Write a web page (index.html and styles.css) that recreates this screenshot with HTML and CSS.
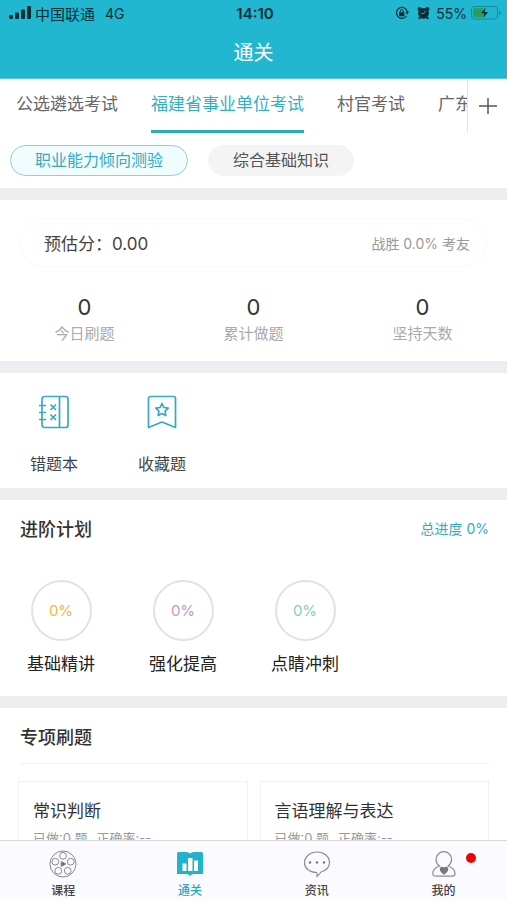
FILE: index.html
```html
<!DOCTYPE html>
<html lang="zh-CN">
<head>
<meta charset="utf-8">
<meta name="viewport" content="width=device-width, initial-scale=1">
<title>通关</title>
<link rel="stylesheet" href="styles.css">
</head>
<body>
<div class="app">
  <header class="header">
    <div class="status">
      <div class="status-side">
        <svg class="signal" width="22" height="14" viewBox="0 0 22 14" aria-hidden="true">
          <rect x="0" y="9" width="4" height="4" rx="1"/><rect x="6" y="6.500" width="4" height="6.500" rx="1"/><rect x="12" y="3.500" width="4" height="9.500" rx="1"/><rect x="18" y="0" width="4" height="13" rx="1"/>
        </svg>
        <span class="carrier">中国联通</span>
        <span>4G</span>
      </div>
      <span class="clock">14:10</span>
      <div class="status-side status-end">
        <svg width="14" height="14" viewBox="0 0 14 14" aria-hidden="true">
          <path d="M9.500 2A5.500 5.500 0 1 0 11.500 10M9.500 2a5.500 5.500 0 0 1 2.800 4" fill="none" stroke="#0b2e36" stroke-width="1.200"/>
          <path d="M10.300 5.800h3.700l-1.700 2.700z"/>
          <rect x="4" y="6.300" width="5.400" height="3.900" rx=".6"/>
          <path d="M5.200 6.500V5.300a1.500 1.500 0 0 1 3 0v1.200" fill="none" stroke="#0b2e36"/>
        </svg>
        <svg class="alarm" width="13" height="14" viewBox="0 0 13 14" aria-hidden="true">
          <circle cx="2.600" cy="3" r="2.100"/><circle cx="10.400" cy="3" r="2.100"/><circle cx="6.500" cy="7.300" r="5.400"/>
          <circle cx="2.600" cy="12" r="1.200"/><circle cx="10.400" cy="12" r="1.200"/>
          <path d="M8.500 4.800L6.600 7.500H4.300" fill="none" stroke="#21b7d0" stroke-width=".9"/>
        </svg>
        <span class="percent">55%</span>
        <svg width="30" height="14" viewBox="0 0 30 14" aria-hidden="true">
          <rect x=".5" y=".5" width="26" height="12.500" rx="3" fill="none" stroke="#168a9c"/>
          <path d="M3.500 2.200H14v9H3.500a1.500 1.500 0 0 1-1.500-1.500v-6a1.500 1.500 0 0 1 1.500-1.500z" fill="#25a05a"/>
          <path d="M28 4.500c2 .8 2 3.700 0 4.500z" fill="#168a9c"/>
          <path d="M15 1.500L9.500 7.500h3.700L11.800 12 17.500 6h-3.700z" fill="#06262d" stroke="#21b7d0" stroke-width=".4"/>
        </svg>
      </div>
    </div>
    <h1 class="title">通关</h1>
  </header>

  <main class="content">
    <section class="exam">
      <div class="exam-row">
        <nav class="exam-tabs">
          <a class="exam-tab" href="#">公选遴选考试</a>
          <a class="exam-tab active" href="#">福建省事业单位考试</a>
          <a class="exam-tab" href="#">村官考试</a>
          <a class="exam-tab" href="#">广东</a>
        </nav>
        <button class="add" aria-label="添加考试">
          <svg width="18" height="18" viewBox="0 0 18 18" fill="none" stroke="#555" stroke-width="1.500" aria-hidden="true"><path d="M0 9h18M9 1v16"/></svg>
        </button>
      </div>
      <div class="pills">
        <button class="pill selected">职业能力倾向测验</button>
        <button class="pill">综合基础知识</button>
      </div>
    </section>

    <section class="summary">
      <div class="score">
        <span class="score-main">预估分：0.00</span>
        <span class="score-rank">战胜 0.0% 考友</span>
      </div>
      <div class="stats">
        <div class="stat"><span class="num">0</span><span class="label">今日刷题</span></div>
        <div class="stat"><span class="num">0</span><span class="label">累计做题</span></div>
        <div class="stat"><span class="num">0</span><span class="label">坚持天数</span></div>
      </div>
    </section>

    <section class="tools">
      <a class="tool" href="#">
        <svg width="32" height="34" viewBox="0 0 32 34" fill="none" stroke="#35abc0" stroke-width="1.700" aria-hidden="true">
          <rect x="4" y="1.500" width="26" height="31" rx="2.500"/>
          <path d="M21.500 1.500v31M1 10.500h7M1 17.500h7M1 24.500h7"/>
          <path d="M12.500 9.500l5.500 5.500M18 9.500l-5.500 5.500M12.500 19.500l5.500 5.500M18 19.500l-5.500 5.500"/>
        </svg>
        <span>错题本</span>
      </a>
      <a class="tool" href="#">
        <svg width="32" height="34" viewBox="0 0 32 34" fill="none" stroke="#35abc0" stroke-width="1.700" stroke-linejoin="round" aria-hidden="true">
          <path d="M2.500 32.500V3.500a2 2 0 0 1 2-2h23a2 2 0 0 1 2 2v29L16 27z"/>
          <path d="M16 8.500l1.900 4 4.300.6-3.100 3.100.7 4.400-3.800-2.100-3.800 2.100.7-4.400-3.100-3.100 4.300-.6z"/>
        </svg>
        <span>收藏题</span>
      </a>
    </section>

    <section class="plan">
      <div class="section-head">
        <h2>进阶计划</h2>
        <span class="progress">总进度 0%</span>
      </div>
      <div class="stages">
        <div class="stage"><span class="ring gold">0%</span><span>基础精讲</span></div>
        <div class="stage"><span class="ring purple">0%</span><span>强化提高</span></div>
        <div class="stage"><span class="ring green">0%</span><span>点睛冲刺</span></div>
      </div>
    </section>

    <section class="practice">
      <div class="section-head ruled"><h2>专项刷题</h2></div>
      <div class="cards">
        <a class="card" href="#"><h3>常识判断</h3><p><span>已做:0 题</span><span>正确率:--</span></p></a>
        <a class="card" href="#"><h3>言语理解与表达</h3><p><span>已做:0 题</span><span>正确率:--</span></p></a>
      </div>
    </section>
  </main>

  <nav class="tabbar">
    <a class="tab" href="#">
      <svg width="28" height="28" viewBox="0 0 28 28" fill="none" stroke="#8c8c8c" aria-hidden="true">
        <circle cx="14" cy="14" r="13"/><circle cx="14" cy="5.800" r="3.400"/><circle cx="6.300" cy="11.700" r="3.400"/><circle cx="21.700" cy="11.700" r="3.400"/><circle cx="9.300" cy="20.800" r="3.400"/><circle cx="18.700" cy="20.800" r="3.400"/>
        <path d="M12.200 11.500v5l4.800-2.500z" fill="#666"/>
      </svg>
      <span>课程</span>
    </a>
    <a class="tab current" href="#">
      <svg width="28" height="28" viewBox="0 0 28 28" aria-hidden="true">
        <path d="M1 3.500Q1 2 2.500 2H10q3 0 4 1.500Q15 2 18 2h7.500Q27 2 27 3.500V24h-9.500q-2 0-3.500 2-1.500-2-3.500-2H1z" fill="#21b3cb"/>
        <path d="M6.500 13.500H10.500V21H6.500zM12 8h4.500v13H12zM18 10.500h4V21h-4z" fill="#fff"/>
      </svg>
      <span>通关</span>
    </a>
    <a class="tab" href="#">
      <svg width="28" height="28" viewBox="0 0 28 28" fill="none" stroke="#8c8c8c" stroke-width="1.200" aria-hidden="true">
        <path d="M13.500 22.500C6 22.500 1.500 18 1.500 12.500S7 2 14 2s12.500 4.500 12.500 10.500c0 5-4 8.500-8.500 9.500-1 1.500-2.300 3.200-4 4.200.3-1.200.2-2.500-.5-3.700z"/>
        <g fill="#777" stroke="none"><circle cx="7" cy="12.500" r="1.200"/><circle cx="14" cy="12.500" r="1.200"/><circle cx="21" cy="12.500" r="1.200"/></g>
      </svg>
      <span>资讯</span>
    </a>
    <a class="tab" href="#">
      <span class="icon-wrap">
        <svg width="28" height="28" viewBox="0 0 28 28" fill="none" stroke="#8c8c8c" stroke-width="1.200" aria-hidden="true">
          <path d="M9.500 16C7 14 6 12 6 9.500a7.800 7.800 0 0 1 15.600 0c0 2.500-1 4.500-3.500 6.500 4 1.500 6.900 4 6.900 7.500 0 2-1.200 2.700-3 2.700h-16c-2 0-3.200-.7-3.200-2.700 0-3.500 2.700-6 6.700-7.500z"/>
          <path d="M14 24c-2.300-1.800-3.600-3-3.600-4.500a1.800 1.800 0 0 1 3.600-.6 1.800 1.800 0 0 1 3.600.6c0 1.500-1.300 2.700-3.600 4.500z" fill="#777" stroke="#777"/>
        </svg>
        <i class="dot"></i>
      </span>
      <span>我的</span>
    </a>
  </nav>
</div>
</body>
</html>
```
FILE: styles.css
```css
* { box-sizing: border-box; }
body, h1, h2, h3, p { margin: 0; }
body {
  font-family: Inter, "Noto Sans CJK SC", sans-serif;
  font-size: 17px;
  color: #333;
  background: #eeeef2;
}
a { color: inherit; text-decoration: none; }
button { font: inherit; color: inherit; border: 0; background: none; padding: 0; }
svg { display: block; flex: none; }

.app { height: 100vh; display: flex; flex-direction: column; }

.header { flex: none; background: #21b7d0; border-bottom: 1px solid #5fc6d8; }
.status {
  display: grid;
  grid-template-columns: 1fr auto 1fr;
  align-items: center;
  height: 26px;
  padding: 0 6px 0 9px;
  font-size: 14px;
  color: #0b2e36;
}
.status-side { display: flex; align-items: center; gap: 4px; }
.status-end { justify-content: flex-end; }
.status svg { fill: #0b2e36; }
.carrier { margin-right: 6px; font-size: 15px; }
.alarm { margin: 0 2px 0 4px; }
.clock { font-weight: 600; font-size: 15px; }
.title {
  height: 52px;
  line-height: 54px;
  text-align: center;
  font-size: 20px;
  font-weight: 400;
  color: #fff;
}

.content { flex: 1; min-height: 0; overflow: hidden; display: flex; flex-direction: column; gap: 12px; }
.content > section { flex: none; background: #fff; }

.exam { padding-bottom: 12px; }
.exam-row { display: flex; }
.exam-tabs { flex: 1; min-width: 0; display: flex; gap: 33px; padding-left: 16px; overflow: hidden; white-space: nowrap; color: #666; }
.exam-tab { flex: none; height: 54px; line-height: 51px; border-bottom: 3px solid transparent; }
.exam-tab.active { color: #31afc4; border-color: #2fa9be; }
.add { width: 40px; display: grid; place-items: center; border-left: 1px solid #e4e4e8; }
.pills { display: flex; gap: 20px; padding: 12px 10px 0; }
.pill {
  height: 31px;
  padding: 0 24px;
  border: 1px solid #f4f4f4;
  border-radius: 16px;
  background: #f4f4f4;
  font-size: 16px;
  line-height: 29px;
  color: #555;
}
.pill.selected { background: #f0fcfd; border-color: #8fd0d6; color: #35abc0; }

.summary { padding: 18px 20px 17px; }
.score {
  display: flex;
  align-items: center;
  justify-content: space-between;
  height: 49px;
  padding: 0 16px 0 23px;
  border: 1px solid #fafafa;
  border-radius: 24px;
}
.score-main { color: #444; }
.score-rank { font-size: 14px; color: #999; }
.stats { display: grid; grid-template-columns: repeat(3, 1fr); margin: 25px -20px 0; }
.stat { display: flex; flex-direction: column; align-items: center; gap: 2px; }
.num { font-size: 22px; line-height: 30px; }
.label { font-size: 15px; line-height: 20px; color: #aaa; }

.tools { display: flex; padding: 22px 0 12px; font-size: 16px; color: #444; }
.tool { width: 108px; display: flex; flex-direction: column; align-items: center; gap: 23px; line-height: 24px; }

.section-head { display: flex; align-items: center; justify-content: space-between; height: 56px; margin: 0 18px 0 20px; }
.section-head.ruled { border-bottom: 1px solid #f3f3f3; }
h2 { font-size: 18px; font-weight: 500; }
.progress { font-size: 14px; color: #35abc0; }

.stages { display: flex; padding: 24px 0 20px; }
.stage { width: 122px; display: flex; flex-direction: column; align-items: center; gap: 11px; line-height: 24px; color: #222; }
.ring {
  width: 61px;
  height: 61px;
  display: grid;
  place-items: center;
  border: 2px solid #e2e2e2;
  border-radius: 50%;
  font-size: 15px;
}
.gold { color: #edb740; }
.purple { color: #c694c8; }
.green { color: #83cdc5; }

.cards { display: grid; grid-template-columns: 1fr 1fr; gap: 12px; padding: 17px 18px; }
.card { padding: 15px 14px; border: 1px solid #f0f0f0; }
.card h3 { font-size: 17px; font-weight: 400; line-height: 28px; }
.card p { display: flex; gap: 9px; font-size: 13px; line-height: 26px; color: #999; }

.tabbar {
  flex: none;
  display: grid;
  grid-template-columns: repeat(4, 1fr);
  height: 60px;
  padding-top: 9px;
  background: #fafaff;
  border-top: 1px solid #d8d8dc;
  font-size: 12px;
  color: #444;
}
.tab { display: flex; flex-direction: column; align-items: center; gap: 4px; line-height: 18px; font-weight: 500; }
.tab.current { color: #21a9c0; }
.icon-wrap { position: relative; }
.dot { position: absolute; top: 3px; left: 36px; width: 10px; height: 10px; border-radius: 50%; background: #f0000c; }
```
